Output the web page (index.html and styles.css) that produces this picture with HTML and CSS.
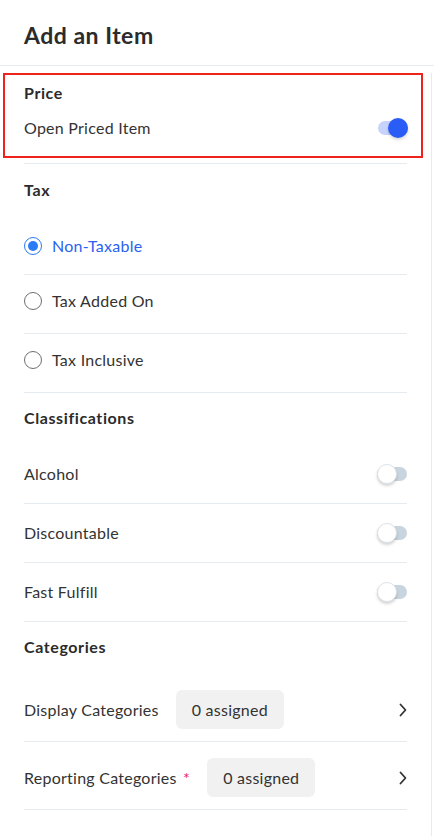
FILE: index.html
```html
<!DOCTYPE html>
<html lang="en">
<head>
<meta charset="utf-8">
<title>Add an Item</title>
<link rel="stylesheet" href="styles.css">
</head>
<body>
<div class="page">
  <header class="header">
    <h1 class="title">Add an Item</h1>
  </header>
  <main class="content">
    <section class="price-box">
      <h2 class="heading heading-price">Price</h2>
      <div class="price-row">
        <span class="label">Open Priced Item</span>
        <span class="toggle on"><span class="thumb"></span></span>
      </div>
    </section>
    <div class="section">
      <div class="divider-top"></div>
      <h2 class="heading">Tax</h2>
      <label class="row radio-row first">
        <span class="radio checked"></span>
        <span class="label selected">Non-Taxable</span>
      </label>
      <label class="row radio-row">
        <span class="radio"></span>
        <span class="label">Tax Added On</span>
      </label>
      <label class="row radio-row">
        <span class="radio"></span>
        <span class="label">Tax Inclusive</span>
      </label>

      <h2 class="heading">Classifications</h2>
      <div class="row toggle-row first">
        <span class="label">Alcohol</span>
        <span class="toggle"><span class="thumb"></span></span>
      </div>
      <div class="row toggle-row">
        <span class="label">Discountable</span>
        <span class="toggle"><span class="thumb"></span></span>
      </div>
      <div class="row toggle-row">
        <span class="label">Fast Fulfill</span>
        <span class="toggle"><span class="thumb"></span></span>
      </div>

      <h2 class="heading">Categories</h2>
      <div class="row cat-row first">
        <span class="label">Display Categories</span>
        <span class="pill">0 assigned</span>
        <svg class="chevron" width="10" height="16" viewBox="0 0 10 16"><path d="M2.5 2.5 L7.5 8 L2.5 13.5" fill="none" stroke="#333" stroke-width="1.8" stroke-linecap="round" stroke-linejoin="round"/></svg>
      </div>
      <div class="row cat-row">
        <span class="label">Reporting Categories <span class="req">*</span></span>
        <span class="pill">0 assigned</span>
        <svg class="chevron" width="10" height="16" viewBox="0 0 10 16"><path d="M2.5 2.5 L7.5 8 L2.5 13.5" fill="none" stroke="#333" stroke-width="1.8" stroke-linecap="round" stroke-linejoin="round"/></svg>
      </div>
    </div>
  </main>
</div>
</body>
</html>
```

FILE: styles.css
```css
* { box-sizing: border-box; }
html, body {
  margin: 0;
  padding: 0;
  background: #ffffff;
}
body {
  font-family: Lato, "Noto Sans", "Liberation Sans", sans-serif;
  color: #333333;
  font-size: 16px;
}
.page {
  width: 434px;
  height: 836px;
  overflow: hidden;
}
.header {
  height: 66px;
  border-bottom: 1px solid #e4ecf2;
  padding: 22px 24px 0;
}
.title {
  margin: 0;
  font-size: 23px;
  line-height: 26px;
  font-weight: 700;
  letter-spacing: 0.5px;
  color: #2b2b2b;
}
.content {
  width: 432px;
  height: 770px;
  border-right: 1px solid #e4ecf2;
}
.price-box {
  margin: 7px 0 0 3px;
  width: 420px;
  border: 2px solid #f0231c;
  padding: 8px 13px 9px 19px;
}
.heading {
  margin: 0;
  font-size: 16px;
  line-height: 20px;
  font-weight: 700;
  letter-spacing: 0.6px;
  color: #2b2b2b;
  padding-top: 15px;
}
.heading-price { padding-top: 0; }
.price-row {
  margin-top: 6px;
  height: 38px;
  display: flex;
  align-items: center;
  justify-content: space-between;
}
.label {
  line-height: 20px;
  font-size: 16px;
  letter-spacing: 0.25px;
  color: #333333;
}
.label.selected { color: #2a62f0; }
.section {
  padding: 0 24px;
}
.divider-top {
  margin-top: 5px;
  height: 1px;
  background: #e4ecf2;
}
.section .divider-top + .heading { padding-top: 16px; }
.row {
  display: flex;
  align-items: center;
  border-bottom: 1px solid #e4ecf2;
}
.radio-row {
  padding: 16px 0 22px;
  gap: 10px;
}
.radio-row.first { padding: 36px 0 18px; }
.toggle-row {
  justify-content: space-between;
  padding: 19px 0 19px;
}
.toggle-row.first { padding: 36px 0 19px; }
.radio {
  width: 18px;
  height: 18px;
  border-radius: 50%;
  border: 1px solid #6f6f6f;
  flex: none;
  position: relative;
}
.radio.checked {
  border: 1.5px solid #2a7bf6;
}
.radio.checked::after {
  content: "";
  position: absolute;
  left: 2.5px;
  top: 2.5px;
  width: 10px;
  height: 10px;
  border-radius: 50%;
  background: #2a7bf6;
}
.toggle {
  width: 30px;
  height: 14px;
  border-radius: 7px;
  background: #c9d5de;
  position: relative;
  flex: none;
}
.toggle .thumb {
  position: absolute;
  top: -3px;
  left: 0;
  width: 20px;
  height: 20px;
  border-radius: 50%;
  background: #ffffff;
  border: 1px solid #dde4ea;
  box-shadow: 0 2px 3px rgba(0, 0, 0, 0.18);
}
.toggle.on { background: #c7d3fb; }
.toggle.on .thumb {
  left: 10px;
  background: #2a5cf6;
  border: none;
  box-shadow: 0 2px 3px rgba(0, 0, 0, 0.15);
}
.cat-row {
  padding: 16px 0 12px;
}
.cat-row.first { padding: 33px 0 12px; }
.pill {
  margin-left: 17px;
  height: 39px;
  padding: 0 16px;
  border-radius: 6px;
  background: #f1f1f1;
  display: flex;
  align-items: center;
  font-size: 16px;
  letter-spacing: 0.25px;
  color: #333333;
}
.req { color: #e8195f; margin-left: 2px; }
.chevron {
  margin-left: auto;
  margin-right: -1px;
}
```
